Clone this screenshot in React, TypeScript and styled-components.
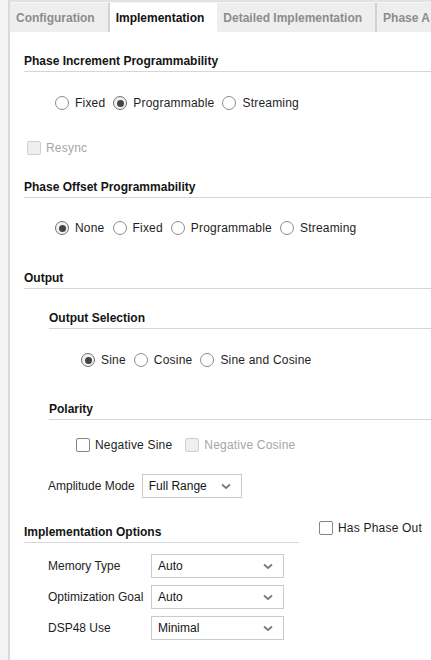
import React from "react";
import styled, { createGlobalStyle } from "styled-components";

const Global = createGlobalStyle`
  html, body { margin: 0; padding: 0; background: #ffffff; }
  body { font-family: "Liberation Sans", Arial, sans-serif; font-size: 12px; color: #1e1e1e; }
`;

const Page = styled.div`
  display: flex;
  width: 431px;
  height: 660px;
  overflow: hidden;
`;

const Gutter = styled.div`
  width: 8px;
  flex: none;
  background: #f3f3f3;
  border-right: 2px solid #dadada;
`;

const Main = styled.div`
  flex: 1;
  display: flex;
  flex-direction: column;
  min-width: 0;
  background: #ffffff;
`;

const TabBar = styled.div`
  display: flex;
  height: 29px;
  border-top: 2px solid #e2e2e2;
  padding-top: 1px;
  background: #f6f6f6;
  white-space: nowrap;
  overflow: hidden;
`;

const Tab = styled.div<{ $active?: boolean; $sep?: boolean }>`
  display: flex;
  align-items: center;
  padding: 0 13px 0 6px;
  font-weight: bold;
  font-size: 12px;
  color: ${(p) => (p.$active ? "#111111" : "#8c8c8c")};
  background: ${(p) => (p.$active ? "#ffffff" : "#eeeeee")};
  border-left: ${(p) => (p.$sep ? "2px solid #d2d2d2" : "none")};
  flex: none;
`;

const Content = styled.div`
  display: flex;
  flex-direction: column;
  padding-left: 14px;
`;

const Heading = styled.div<{ $indent?: number; $top: number; $width?: number }>`
  margin-top: ${(p) => p.$top}px;
  margin-left: ${(p) => p.$indent ?? 0}px;
  width: ${(p) => (p.$width ? `${p.$width}px` : "auto")};
  font-weight: bold;
  font-size: 12px;
  line-height: 15px;
  color: #141414;
  padding-bottom: 2px;
  border-bottom: 1px solid #d6d6d6;
`;

const OptionRow = styled.div<{ $indent: number; $top: number }>`
  display: flex;
  align-items: center;
  height: 16px;
  margin-top: ${(p) => p.$top}px;
  margin-left: ${(p) => p.$indent}px;
`;

const Option = styled.label<{ $disabled?: boolean; $space?: number; $gap?: number }>`
  display: flex;
  align-items: center;
  gap: ${(p) => p.$gap ?? 5}px;
  margin-right: ${(p) => p.$space ?? 8}px;
  line-height: 16px;
  letter-spacing: 0.2px;
  color: ${(p) => (p.$disabled ? "#a6a6a6" : "#1e1e1e")};
`;

const RadioCircle = styled.span<{ $checked?: boolean }>`
  box-sizing: border-box;
  width: 14px;
  height: 14px;
  border-radius: 50%;
  border: 1px solid ${(p) => (p.$checked ? "#707070" : "#8c8c8c")};
  background: ${(p) => (p.$checked ? "#f2f2f2" : "#ffffff")};
  display: flex;
  align-items: center;
  justify-content: center;
  flex: none;
  &::after {
    content: "";
    display: ${(p) => (p.$checked ? "block" : "none")};
    width: 7px;
    height: 7px;
    border-radius: 50%;
    background: #444444;
  }
`;

const CheckBox = styled.span<{ $disabled?: boolean }>`
  box-sizing: border-box;
  width: 14px;
  height: 14px;
  border-radius: 2px;
  border: 1px solid ${(p) => (p.$disabled ? "#cfcfcf" : "#858585")};
  background: ${(p) => (p.$disabled ? "#efefef" : "#ffffff")};
  flex: none;
`;

const FieldRow = styled.div<{ $top: number }>`
  display: flex;
  align-items: center;
  margin-top: ${(p) => p.$top}px;
  margin-left: 24px;
  gap: 7px;
`;

const FieldLabel = styled.span`
  color: #1e1e1e;
  line-height: 16px;
`;

const Select = styled.div<{ $width: number }>`
  box-sizing: border-box;
  width: ${(p) => p.$width}px;
  height: 24px;
  border: 1px solid #cacaca;
  background: #ffffff;
  display: flex;
  align-items: center;
  justify-content: space-between;
  padding: 0 10px 0 6px;
  color: #141414;
`;

const Chevron = () => (
  <svg width="10" height="7" viewBox="0 0 10 7">
    <path d="M1 1.5 L5 5 L9 1.5" fill="none" stroke="#7a7a7a" strokeWidth="1.8" />
  </svg>
);

const SplitRow = styled.div`
  display: flex;
  align-items: flex-start;
  margin-top: 23px;
`;

const SideCheck = styled.div`
  margin-left: 20px;
  margin-top: -1px;
`;

const FormGrid = styled.div`
  display: grid;
  grid-template-columns: 103px 133px;
  row-gap: 7px;
  align-items: center;
  margin-top: 11px;
  margin-left: 24px;
`;

type RadioOpt = { label: string; checked?: boolean };

const RadioGroup = ({ opts, indent, top }: { opts: RadioOpt[]; indent: number; top: number }) => (
  <OptionRow $indent={indent} $top={top}>
    {opts.map((o) => (
      <Option key={o.label} $gap={6}>
        <RadioCircle $checked={o.checked} />
        {o.label}
      </Option>
    ))}
  </OptionRow>
);

const SelectBox = ({ value, width }: { value: string; width: number }) => (
  <Select $width={width}>
    <span>{value}</span>
    <Chevron />
  </Select>
);

export default function App() {
  return (
    <>
      <Global />
      <Page>
        <Gutter />
        <Main>
          <TabBar>
            <Tab>Configuration</Tab>
            <Tab $active $sep>Implementation</Tab>
            <Tab>Detailed Implementation</Tab>
            <Tab $sep>Phase A</Tab>
          </TabBar>
          <Content>
            <Heading $top={22}>Phase Increment Programmability</Heading>
            <RadioGroup
              indent={31}
              top={23}
              opts={[{ label: "Fixed" }, { label: "Programmable", checked: true }, { label: "Streaming" }]}
            />
            <OptionRow $indent={3} $top={29}>
              <Option $disabled>
                <CheckBox $disabled />
                Resync
              </Option>
            </OptionRow>
            <Heading $top={24}>Phase Offset Programmability</Heading>
            <RadioGroup
              indent={31}
              top={22}
              opts={[
                { label: "None", checked: true },
                { label: "Fixed" },
                { label: "Programmable" },
                { label: "Streaming" },
              ]}
            />
            <Heading $top={35}>Output</Heading>
            <Heading $top={22} $indent={25}>Output Selection</Heading>
            <RadioGroup
              indent={57}
              top={23}
              opts={[{ label: "Sine", checked: true }, { label: "Cosine" }, { label: "Sine and Cosine" }]}
            />
            <Heading $top={34} $indent={25}>Polarity</Heading>
            <OptionRow $indent={52} $top={17}>
              <Option $space={13}>
                <CheckBox />
                Negative Sine
              </Option>
              <Option $disabled>
                <CheckBox $disabled />
                Negative Cosine
              </Option>
            </OptionRow>
            <FieldRow $top={21}>
              <FieldLabel>Amplitude Mode</FieldLabel>
              <SelectBox value="Full Range" width={100} />
            </FieldRow>
            <SplitRow>
              <Heading $top={4} $width={275}>Implementation Options</Heading>
              <SideCheck>
                <Option>
                  <CheckBox />
                  Has Phase Out
                </Option>
              </SideCheck>
            </SplitRow>
            <FormGrid>
              <FieldLabel>Memory Type</FieldLabel>
              <SelectBox value="Auto" width={133} />
              <FieldLabel>Optimization Goal</FieldLabel>
              <SelectBox value="Auto" width={133} />
              <FieldLabel>DSP48 Use</FieldLabel>
              <SelectBox value="Minimal" width={133} />
            </FormGrid>
          </Content>
        </Main>
      </Page>
    </>
  );
}
